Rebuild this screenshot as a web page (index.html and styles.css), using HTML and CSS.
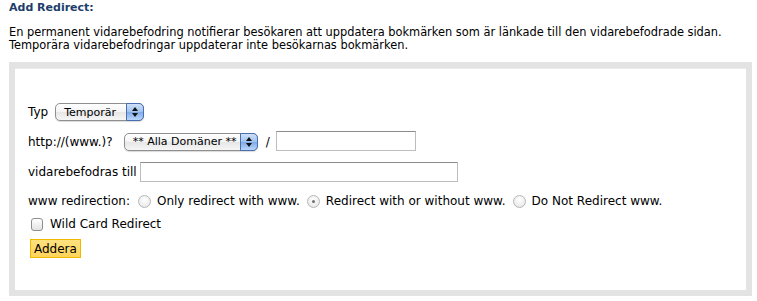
FILE: index.html
```html
<!DOCTYPE html>
<html lang="sv">
<head>
  <meta charset="UTF-8">
  <title>Add Redirect</title>
  <link rel="stylesheet" href="styles.css">
</head>
<body>
  <div id="page">
    <h3 class="title">Add Redirect:</h3>
    <p class="intro">En permanent vidarebefodring notifierar besökaren att uppdatera bokmärken som är länkade till den vidarebefodrade sidan.<br>Temporära vidarebefodringar uppdaterar inte besökarnas bokmärken.</p>
    <form class="box">
      <div class="row row-type">
        <label>Typ</label>
        <span class="select sel-type"><span class="val">Temporär</span><span class="arrows"><i class="up"></i><i class="down"></i></span></span>
      </div>
      <div class="row row-domain">
        <label>http://(www.)?</label>
        <span class="select sel-domain"><span class="val">** Alla Domäner **</span><span class="arrows"><i class="up"></i><i class="down"></i></span></span>
        <span class="slash">/</span>
        <input class="text path" type="text">
      </div>
      <div class="row row-target">
        <label>vidarebefodras till</label>
        <input class="text target" type="text">
      </div>
      <div class="row row-www">
        <label>www redirection:</label>
        <span class="radio"></span><span class="opt">Only redirect with www.</span>
        <span class="radio checked"></span><span class="opt">Redirect with or without www.</span>
        <span class="radio"></span><span class="opt">Do Not Redirect www.</span>
      </div>
      <div class="row row-wild">
        <span class="check"></span><span class="opt">Wild Card Redirect</span>
      </div>
      <div class="row row-submit">
        <button type="button" class="btn">Addera</button>
      </div>
    </form>
  </div>
</body>
</html>
```

FILE: styles.css
```css
html,
body {
  margin: 0;
  padding: 0;
  background: #fff;
  font-family: "DejaVu Sans", Verdana, sans-serif;
  font-size: 11px;
  color: #000;
}
#page {
  padding: 1px 5px 0 9px;
}
.title {
  margin: 0;
  font-size: 11px;
  line-height: 13px;
  font-weight: bold;
  color: #1d3d6b;
}
.intro {
  margin: 12px 0 10px;
  font-size: 11.4px;
  line-height: 13px;
}
.box {
  display: flex;
  flex-direction: column;
  height: 234px;
  box-sizing: border-box;
  padding: 34px 13px 0;
  border: 6px solid #e3e3e3;
  box-shadow: inset 0 1px 0 #ebebeb;
  font-size: 12px;
}
.row {
  display: flex;
  align-items: center;
  white-space: nowrap;
}
.row label {
  margin-right: 7px;
}
.row-domain label {
  margin-right: 11px;
}
.row-target label {
  margin-right: 3px;
}
.row-type { height: 20px; }
.row-domain { height: 21px; margin-top: 9px; }
.row-target { height: 21px; margin-top: 9px; }
.row-www { height: 20px; margin-top: 9px; }
.row-wild { height: 16px; margin-top: 5px; }
.row-submit { height: 19px; margin-top: 7px; }

/* aqua style popup */
.select {
  position: relative;
  display: inline-flex;
  align-items: center;
  height: 18px;
  box-sizing: border-box;
  border: 1px solid #8f8f8f;
  border-radius: 5px;
  background: linear-gradient(#fff, #f3f3f3 50%, #e6e6e6 51%, #f6f6f6);
  box-shadow: 0 1px 1px rgba(0, 0, 0, .15);
  font-size: 11px;
}
.select .val {
  padding-left: 8px;
}
.select .arrows {
  position: absolute;
  top: -1px;
  right: -1px;
  bottom: -1px;
  width: 16px;
  border: 1px solid #4a6fb0;
  border-radius: 0 5px 5px 0;
  background: linear-gradient(#cfe1f8, #9fc1ef 50%, #7fa9e6 51%, #b9d6fb);
}
.select .arrows i {
  position: absolute;
  left: 5px;
  width: 0;
  height: 0;
  border-left: 3px solid transparent;
  border-right: 3px solid transparent;
}
.select .arrows .up {
  top: 3px;
  border-bottom: 4px solid #111;
}
.select .arrows .down {
  bottom: 3px;
  border-top: 4px solid #111;
}
.sel-type {
  width: 89px;
}
.sel-domain {
  width: 134px;
}
.slash {
  margin: 0 6px 0 8px;
}
.text {
  height: 20px;
  box-sizing: border-box;
  margin: 0;
  padding: 0 3px;
  border: 1px solid #bdbdbd;
  border-top-color: #8c8c8c;
  background: #fff;
  font: inherit;
}
.path {
  width: 140px;
  margin-bottom: 1px;
}
.target {
  width: 318px;
}
.radio {
  width: 13px;
  height: 13px;
  box-sizing: border-box;
  margin: 0 6px 0 1px;
  border: 1px solid #b7b7b7;
  border-radius: 50%;
  background: radial-gradient(circle at 50% 35%, #fff, #e2e2e2);
  position: relative;
}
.radio.checked::after {
  content: '';
  position: absolute;
  left: 4px;
  top: 4px;
  width: 3px;
  height: 3px;
  border-radius: 50%;
  background: #6d6d6d;
}
.row-www .opt {
  margin-right: 6px;
}
.check {
  width: 12px;
  height: 13px;
  box-sizing: border-box;
  margin: 0 7px 0 3px;
  border: 1px solid #8e8e8e;
  border-radius: 3px;
  background: linear-gradient(#fff, #e3e3e3);
}
.btn {
  height: 19px;
  margin: 0 0 0 2px;
  padding: 0 3px;
  border: 1px solid #f1b800;
  background: linear-gradient(#ffe17f, #ffd45a);
  font: inherit;
  font-size: 12px;
  color: #000;
}
```
